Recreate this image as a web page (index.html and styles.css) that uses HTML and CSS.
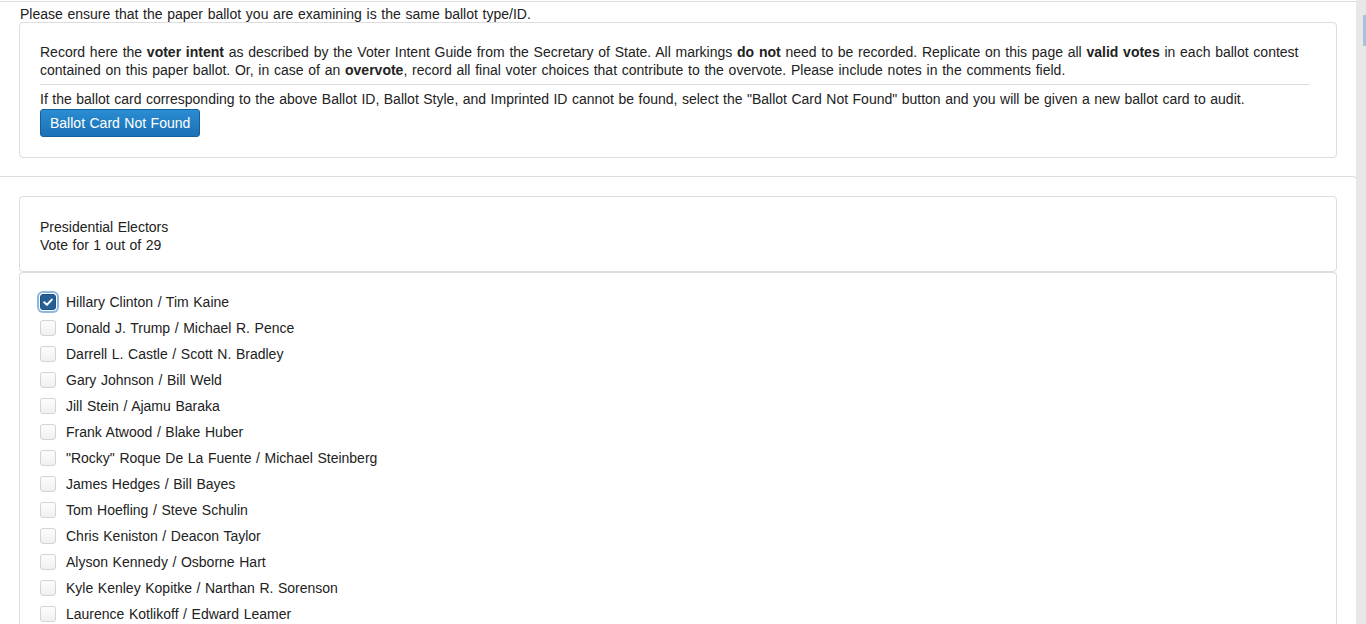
FILE: index.html
```html
<!DOCTYPE html>
<html lang="en">
<head>
<meta charset="utf-8">
<title>Ballot Audit</title>
<link rel="stylesheet" href="styles.css">
</head>
<body>
<div class="page">
  <div class="prev-panel"></div>
  <div class="intro">
    <p class="notice">Please ensure that the paper ballot you are examining is the same ballot type/ID.</p>
    <div class="card">
      <p class="para guide">Record here the <b>voter intent</b> as described by the Voter Intent Guide from the Secretary of State. All markings <b>do not</b> need to be recorded. Replicate on this page all <b>valid votes</b> in each ballot contest contained on this paper ballot. Or, in case of an <b>overvote</b>, record all final voter choices that contribute to the overvote. Please include notes in the comments field.</p>
      <hr class="rule">
      <p class="para wide">If the ballot card corresponding to the above Ballot ID, Ballot Style, and Imprinted ID cannot be found, select the "Ballot Card Not Found" button and you will be given a new ballot card to audit.</p>
      <button class="btn-primary" type="button">Ballot Card Not Found</button>
    </div>
  </div>
  <div class="panel">
    <div class="contest-head">
      <div>Presidential Electors</div>
      <div>Vote for 1 out of 29</div>
    </div>
    <div class="contest-body">
      <label class="choice"><span class="box checked focused"><svg viewBox="0 0 16 16" width="16" height="16"><path d="M4.2 8.3 L6.9 10.9 L11.8 5.6" fill="none" stroke="#fff" stroke-width="2" stroke-linecap="round" stroke-linejoin="round"/></svg></span>Hillary Clinton / Tim Kaine</label>
      <label class="choice"><span class="box"></span>Donald J. Trump / Michael R. Pence</label>
      <label class="choice"><span class="box"></span>Darrell L. Castle / Scott N. Bradley</label>
      <label class="choice"><span class="box"></span>Gary Johnson / Bill Weld</label>
      <label class="choice"><span class="box"></span>Jill Stein / Ajamu Baraka</label>
      <label class="choice"><span class="box"></span>Frank Atwood / Blake Huber</label>
      <label class="choice"><span class="box"></span>"Rocky" Roque De La Fuente / Michael Steinberg</label>
      <label class="choice"><span class="box"></span>James Hedges / Bill Bayes</label>
      <label class="choice"><span class="box"></span>Tom Hoefling / Steve Schulin</label>
      <label class="choice"><span class="box"></span>Chris Keniston / Deacon Taylor</label>
      <label class="choice"><span class="box"></span>Alyson Kennedy / Osborne Hart</label>
      <label class="choice"><span class="box"></span>Kyle Kenley Kopitke / Narthan R. Sorenson</label>
      <label class="choice"><span class="box"></span>Laurence Kotlikoff / Edward Leamer</label>
      <label class="choice"><span class="box"></span>Gloria Estela La Riva / Dennis J. Banks</label>
      <label class="choice"><span class="box"></span>Bradford Lyttle / Hannah Walsh</label>
    </div>
  </div>
</div>
<div class="scrollbar"><div class="thumb"></div></div>
</body>
</html>
```

FILE: styles.css
```css
html, body {
  margin: 0;
  padding: 0;
  background: #fff;
  overflow: hidden;
}
body {
  font-family: "Liberation Sans", Arial, sans-serif;
  font-size: 14px;
  line-height: 18px;
  color: #333;
}
.page {
  width: 1356px;
}
.prev-panel {
  height: 1px;
  border-bottom: 1px solid #ddd;
}
.intro {
  padding: 3px 19px 0 19px;
}
.notice {
  margin: 0 0 0 1px;
  color: #222;
  word-spacing: 0.8px;
}
.card {
  border: 1px solid #ddd;
  border-radius: 4px;
  margin-top: -1px;
  padding: 20px 20px 20px 20px;
}
.para {
  margin: 0;
  color: #222;
}
.para.guide {
  word-spacing: 0.85px;
}
.para.wide {
  word-spacing: 0.6px;
}
.para b {
  font-weight: bold;
}
.rule {
  border: 0;
  border-top: 1px solid #ddd;
  margin: 5px 6px 5px 0;
  height: 0;
}
.btn-primary {
  display: block;
  margin-top: 1px;
  height: 28px;
  padding: 0 9px;
  font-family: "Liberation Sans", Arial, sans-serif;
  font-size: 14px;
  word-spacing: 0.6px;
  color: #fff;
  background: linear-gradient(#2b8dd2, #1a70b5);
  border: 1px solid #175f98;
  border-radius: 3px;
  cursor: pointer;
}
.panel {
  margin: 18px -1px 0 -2px;
  border: 1px solid #ddd;
  border-bottom: 0;
  border-radius: 4px 4px 0 0;
  padding: 19px 19px 0 20px;
}
.contest-head {
  border: 1px solid #ddd;
  border-radius: 4px;
  padding: 21px 20px 17px 20px;
  color: #222;
  word-spacing: 0.6px;
}
.contest-body {
  border: 1px solid #ddd;
  border-bottom: 0;
  border-radius: 4px 4px 0 0;
  padding: 16px 20px 0 20px;
}
.choice {
  display: flex;
  align-items: center;
  height: 26px;
  color: #222;
  word-spacing: 0.7px;
}
.box {
  display: block;
  box-sizing: border-box;
  width: 16px;
  height: 16px;
  margin-right: 10px;
  border: 1px solid #d3d3d3;
  border-radius: 3px;
  background: linear-gradient(#fdfdfd, #f0f0f0);
  flex: none;
}
.box svg {
  display: block;
  margin: -1px;
}
.box.checked {
  background: #255f93;
  border-color: #1f5282;
}
.box.focused {
  box-shadow: 0 0 0 1px #fff, 0 0 0 3px #8ab8e0;
}
.scrollbar {
  position: fixed;
  top: 0;
  right: 0;
  width: 10px;
  height: 100%;
  background: #e8e8e8;
}
.thumb {
  position: absolute;
  top: 15px;
  right: 0;
  width: 3px;
  height: 31px;
  background: #a9c1db;
}
```
